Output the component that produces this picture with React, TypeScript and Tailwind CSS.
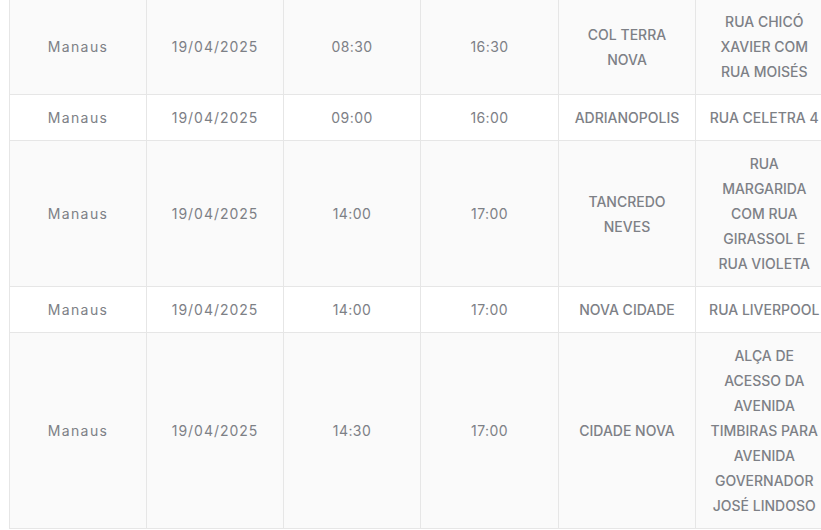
const rows = [
  {
    city: "Manaus",
    date: "19/04/2025",
    start: "08:30",
    end: "16:30",
    bairro: ["COL TERRA", "NOVA"],
    rua: ["RUA CHICÓ", "XAVIER COM", "RUA MOISÉS"],
  },
  {
    city: "Manaus",
    date: "19/04/2025",
    start: "09:00",
    end: "16:00",
    bairro: ["ADRIANOPOLIS"],
    rua: ["RUA CELETRA 4"],
  },
  {
    city: "Manaus",
    date: "19/04/2025",
    start: "14:00",
    end: "17:00",
    bairro: ["TANCREDO", "NEVES"],
    rua: ["RUA", "MARGARIDA", "COM RUA", "GIRASSOL E", "RUA VIOLETA"],
  },
  {
    city: "Manaus",
    date: "19/04/2025",
    start: "14:00",
    end: "17:00",
    bairro: ["NOVA CIDADE"],
    rua: ["RUA LIVERPOOL"],
  },
  {
    city: "Manaus",
    date: "19/04/2025",
    start: "14:30",
    end: "17:00",
    bairro: ["CIDADE NOVA"],
    rua: [
      "ALÇA DE",
      "ACESSO DA",
      "AVENIDA",
      "TIMBIRAS PARA",
      "AVENIDA",
      "GOVERNADOR",
      "JOSÉ LINDOSO",
    ],
  },
];

function Lines({ lines }: { lines: string[] }) {
  return (
    <>
      {lines.map((l, i) => (
        <span key={i} className="block whitespace-nowrap">
          {l}
        </span>
      ))}
    </>
  );
}

const cell =
  "border-l border-b border-[#e6e6e6] px-[10px] py-[10px] text-center align-middle";

export default function App() {
  return (
    <div
      className="h-[530px] w-full overflow-hidden bg-white pl-[9px]"
      style={{ fontFamily: "Inter, 'Noto Sans', sans-serif" }}
    >
      <table className="-mt-[1px] w-[823px] table-fixed border-collapse text-[14px] leading-[25px] text-[#7d8086]">
        <colgroup>
          <col className="w-[137px]" />
          <col className="w-[137px]" />
          <col className="w-[137px]" />
          <col className="w-[138px]" />
          <col className="w-[137px]" />
          <col className="w-[137px]" />
        </colgroup>
        <tbody>
          {rows.map((r, i) => (
            <tr key={i} className={i % 2 === 0 ? "bg-[#fafafa]" : "bg-white"}>
              <td className={cell + " tracking-[0.1em]"}>{r.city}</td>
              <td className={cell + " tracking-[0.07em]"}>{r.date}</td>
              <td className={cell + " tracking-[0.03em]"}>{r.start}</td>
              <td className={cell + " tracking-[0.03em]"}>{r.end}</td>
              <td className={cell + " font-medium"}>
                <Lines lines={r.bairro} />
              </td>
              <td className={cell + " font-medium"}>
                <Lines lines={r.rua} />
              </td>
            </tr>
          ))}
        </tbody>
      </table>
    </div>
  );
}
